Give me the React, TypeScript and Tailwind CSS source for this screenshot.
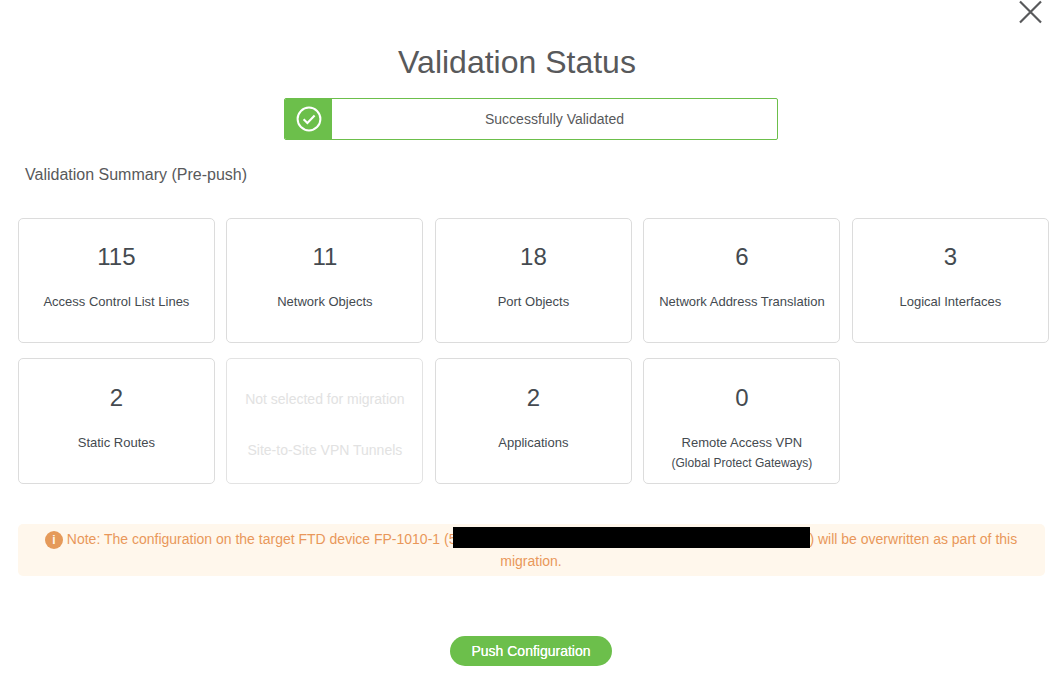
import React from 'react';

type Stat = { value?: string; label: string; sub?: string };

const stats: Stat[] = [
  { value: '115', label: 'Access Control List Lines' },
  { value: '11', label: 'Network Objects' },
  { value: '18', label: 'Port Objects' },
  { value: '6', label: 'Network Address Translation' },
  { value: '3', label: 'Logical Interfaces' },
  { value: '2', label: 'Static Routes' },
  { label: 'Site-to-Site VPN Tunnels' },
  { value: '2', label: 'Applications' },
  { value: '0', label: 'Remote Access VPN', sub: '(Global Protect Gateways)' },
];

const StatCard: React.FC<{ stat: Stat }> = ({ stat }) => {
  if (!stat.value) {
    return (
      <div className="h-[125.5px] rounded-[5px] border border-[#e3e3e3] flex flex-col items-center text-[14px] text-[#e2e2e2]">
        <div className="mt-[30px] leading-[20px]">Not selected for migration</div>
        <div className="mt-[31px] leading-[20px]">{stat.label}</div>
      </div>
    );
  }
  return (
    <div className="h-[125.5px] rounded-[5px] border border-[#dcdcdc] flex flex-col items-center text-[#444a50]">
      <div className="mt-[22.3px] text-[24px] leading-[32px]">{stat.value}</div>
      <div className="mt-[19.1px] text-[13px] leading-[20px]">{stat.label}</div>
      {stat.sub && <div className="mt-[1.5px] text-[12px] leading-[18px]">{stat.sub}</div>}
    </div>
  );
};

export default function App() {
  return (
    <div className="relative h-[683px] w-[1052px] overflow-hidden bg-white font-['Liberation_Sans',Arial,sans-serif] text-[#58595b]">
      <button className="absolute right-[9px] top-0 text-[#58595b]" aria-label="Close">
        <svg width="24" height="24" viewBox="0 0 24 24" fill="none" stroke="currentColor" strokeWidth="2.2">
          <path d="M1 1.5 L22 22.5 M22 1.5 L1 22.5" />
        </svg>
      </button>

      <h1 className="pt-[42px] pr-[18px] text-center text-[32px] leading-[40px] text-[#58595b]">Validation Status</h1>

      <div className="ml-[284px] mt-[16px] flex h-[42px] w-[494px] overflow-hidden rounded-[2px] border border-[#6cbf4b]">
        <div className="flex w-[47px] items-center justify-center bg-[#6cbf4b]">
          <svg width="26" height="26" viewBox="0 0 26 26" fill="none" stroke="#ffffff">
            <circle cx="13" cy="13" r="11.4" strokeWidth="2" />
            <path d="M7.6 13.2 L11.4 17 L18.6 9.6" strokeWidth="2.1" />
          </svg>
        </div>
        <div className="flex-1 text-center text-[14px] leading-[40px] text-[#58595b]">Successfully Validated</div>
      </div>

      <div className="ml-[25px] mt-[24px] text-[16px] leading-[22px]">Validation Summary (Pre-push)</div>

      <div className="ml-[17.9px] mt-[31.8px] grid w-[1031px] grid-cols-5 gap-x-[11.5px] gap-y-[15px]">
        {stats.map((stat) => (
          <StatCard key={stat.label} stat={stat} />
        ))}
      </div>

      <div className="ml-[18px] mt-[40px] h-[52px] w-[1027px] rounded-[5px] bg-[#fff7ec] pr-[1px] pt-[4.2px] text-center text-[14px] leading-[22px] text-[#e9975a]">
        <span className="mr-[4px] inline-flex h-[18px] w-[18px] items-center justify-center rounded-full bg-[#e59a5a] align-baseline text-[12px] font-bold leading-none text-[#fff7ec]">
          i
        </span>
        Note: The configuration on the target FTD device FP-1010-1 (5
        <span className="relative -top-[1px] ml-[-3px] mr-[-1px] inline-block h-[21px] w-[357px] bg-black align-[-5px]" />
        ) will be overwritten as part of this migration.
      </div>

      <div className="mt-[60px] flex justify-center pl-[10px]">
        <button className="h-[30px] w-[162px] rounded-full bg-[#6cbf4b] pt-[1px] text-[14px] text-white [text-shadow:0_0_0.4px_#ffffff]">
          Push Configuration
        </button>
      </div>
    </div>
  );
}
